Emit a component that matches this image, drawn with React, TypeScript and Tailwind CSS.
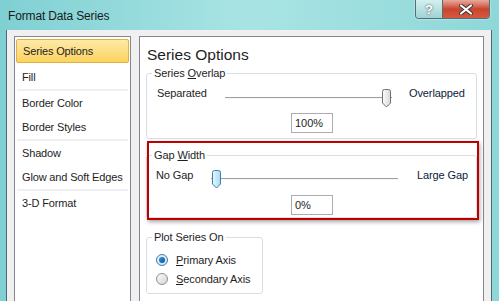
const font = { fontFamily: '"Liberation Sans", Arial, sans-serif' };

const items = [
  { label: "Series Options", selected: true },
  { label: "Fill", sep: true },
  { label: "Border Color" },
  { label: "Border Styles", sep: true },
  { label: "Shadow" },
  { label: "Glow and Soft Edges", sep: true },
  { label: "3-D Format" },
];

// Win7 style trackbar, thumb sits at one end
const Slider = ({ pos, blue, w, className = "" }: { pos: "start" | "end"; blue?: boolean; w: string; className?: string }) => (
  <div className={`relative h-[19px] ${w} ${className}`}>
    <div className="absolute left-0 right-0 top-[8px] h-[2px] border-t border-[#a0a0a0] border-b border-b-[#f6f6f6]" />
    <svg
      width="11"
      height="19"
      viewBox="0 0 11 19"
      className={`absolute top-0 ${pos === "start" ? "left-0" : "right-0"}`}
    >
      <defs>
        <linearGradient id={blue ? "tb" : "tg"} x1="0" x2="1" y1="0" y2="0">
          <stop offset="0" stopColor={blue ? "#eaf8fe" : "#fcfcfc"} />
          <stop offset="1" stopColor={blue ? "#a6daf2" : "#d9d9d9"} />
        </linearGradient>
      </defs>
      <path
        d="M1.5 2.5 Q1.5 0.5 3.5 0.5 H7.5 Q9.5 0.5 9.5 2.5 V14 L5.5 18 L1.5 14 Z"
        fill={`url(#${blue ? "tb" : "tg"})`}
        stroke={blue ? "#3c7fb1" : "#707070"}
      />
    </svg>
  </div>
);

const Group = ({ title, u, rest, className, children }: any) => (
  <fieldset className={`border border-[#d5dfe5] rounded-[3px] ${className}`}>
    <legend className="ml-[5px] px-[2px] text-[11px] tracking-[-0.1px] leading-[14px] text-[#1e1e1e]">
      {title}
      <span className="underline">{u}</span>
      {rest}
    </legend>
    {children}
  </fieldset>
);

const ValueBox = ({ v }: { v: string }) => (
  <div className="ml-[144px] w-[42px] h-[20px] border border-[#abadb3] text-[11px] pl-[3px] leading-[18px] bg-white">
    {v}
  </div>
);

export default function App() {
  return (
    <div
      className="w-[499px] h-[301px] overflow-hidden relative bg-gradient-to-r from-[#7fd0d3] via-[#a9e4e4] to-[#8ed7d8] text-[#1e1e1e]"
      style={font}
    >
      {/* title bar */}
      <div className="h-[30px] flex items-start">
        <div className="pl-[8px] pt-[9px] text-[12px] tracking-[-0.15px] leading-[14px] text-[#1a1a1a] flex-1">
          Format Data Series
        </div>
        <div className="flex mr-[9px] rounded-b-[4px] overflow-hidden border border-t-0 border-[#53707a] shadow-[0_0_2px_rgba(255,255,255,0.8)]">
          <div className="w-[27px] h-[18px] flex items-center justify-center bg-gradient-to-b from-[#d3f0f0] to-[#9fd3d3] border-r border-[#53707a] text-white font-bold text-[13px] leading-none [text-shadow:0_0_2px_#333]">
            ?
          </div>
          <div className="w-[46px] h-[18px] flex items-center justify-center bg-gradient-to-b from-[#e9a99c] via-[#c8452e] to-[#d8583d]">
            <svg width="14" height="11" viewBox="0 0 14 11">
              <path d="M2 1.5 L12 9.5 M12 1.5 L2 9.5" stroke="#3a3a3a" strokeWidth="4" strokeLinecap="round" />
              <path d="M2 1.5 L12 9.5 M12 1.5 L2 9.5" stroke="#fff" strokeWidth="2.2" strokeLinecap="round" />
            </svg>
          </div>
        </div>
      </div>

      {/* client frame */}
      <div className="flex h-[271px]">
        <div className="w-[6px]" />
        <div className="w-[486px] border-l border-r border-[#4a6a72] bg-[#f0f0f0] flex pt-[6px] pl-[7px]">
          {/* category list */}
          <div className="w-[117px] h-[270px] border border-[#828790] bg-white px-[1px] pt-[2px] text-[11px] tracking-[-0.15px]">
            {items.map((it) => (
              <div key={it.label}>
                <div
                  className={`h-[24px] flex items-center pl-[6px] ${
                    it.selected
                      ? "bg-gradient-to-b from-[#fdeaa6] to-[#fbd35d] border border-[#e0b043] rounded-[2px] pl-[5px] mb-[2px]"
                      : ""
                  }`}
                >
                  {it.label}
                </div>
                {it.sep && <div className="h-[2px] mx-[1px] bg-[#eef0f4]" />}
              </div>
            ))}
          </div>

          {/* options pane */}
          <div className="ml-[8px] w-[345px] h-[270px] border border-[#828790] bg-white pl-[6px] pr-[6px]">
            <div className="text-[15.5px] leading-[20px] pt-[8px] pl-[1px]">Series Options</div>

            <Group title="Series " u="O" rest="verlap" className="h-[73px] mt-[1px]">
              <div className="flex items-start pl-[10px] mt-[6px] text-[11px] tracking-[-0.1px] leading-[14px]">
                <span className="w-[68px]">Separated</span>
                <Slider pos="end" w="w-[167px]" className="mt-[3px]" />
                <span className="ml-[17px] text-[#0c1c3c]">Overlapped</span>
              </div>
              <div className="mt-[5px]">
                <ValueBox v="100%" />
              </div>
            </Group>

            <Group title="Gap " u="W" rest="idth" className="h-[70px] mt-[9px]">
              <div className="flex items-start pl-[9px] mt-[6px] text-[11px] tracking-[-0.1px] leading-[14px]">
                <span className="w-[55px]">No Gap</span>
                <Slider pos="start" blue w="w-[187px]" className="mt-[2px]" />
                <span className="ml-[19px] text-[#0c1c3c]">Large Gap</span>
              </div>
              <div className="mt-[6px]">
                <ValueBox v="0%" />
              </div>
            </Group>

            <Group title="Plot Series On" className="w-[117px] h-[64px] mt-[12px]">
              <div className="pl-[9px] pt-[9px] flex flex-col gap-[5px] text-[11px] tracking-[-0.1px]">
                <label className="flex items-center gap-[8px] h-[14px]">
                  <span className="w-[12px] h-[12px] rounded-full border border-[#3c7fb1] bg-gradient-to-br from-[#e8f4fc] to-[#c8e2f3] flex items-center justify-center">
                    <span className="w-[6px] h-[6px] rounded-full bg-gradient-to-br from-[#3a9be0] to-[#0d4f86]" />
                  </span>
                  <span>
                    <span className="underline">P</span>rimary Axis
                  </span>
                </label>
                <label className="flex items-center gap-[8px] h-[14px]">
                  <span className="w-[12px] h-[12px] rounded-full border border-[#8f8f8f] bg-gradient-to-br from-[#fafafa] to-[#d6d6d6]" />
                  <span>
                    <span className="underline">S</span>econdary Axis
                  </span>
                </label>
              </div>
            </Group>
          </div>
        </div>
      </div>

      {/* red annotation box */}
      <div className="absolute left-[147px] top-[141px] w-[332px] h-[79px] border-2 border-[#c00000] shadow-[1px_2px_4px_rgba(0,0,0,0.35)]" />
    </div>
  );
}
